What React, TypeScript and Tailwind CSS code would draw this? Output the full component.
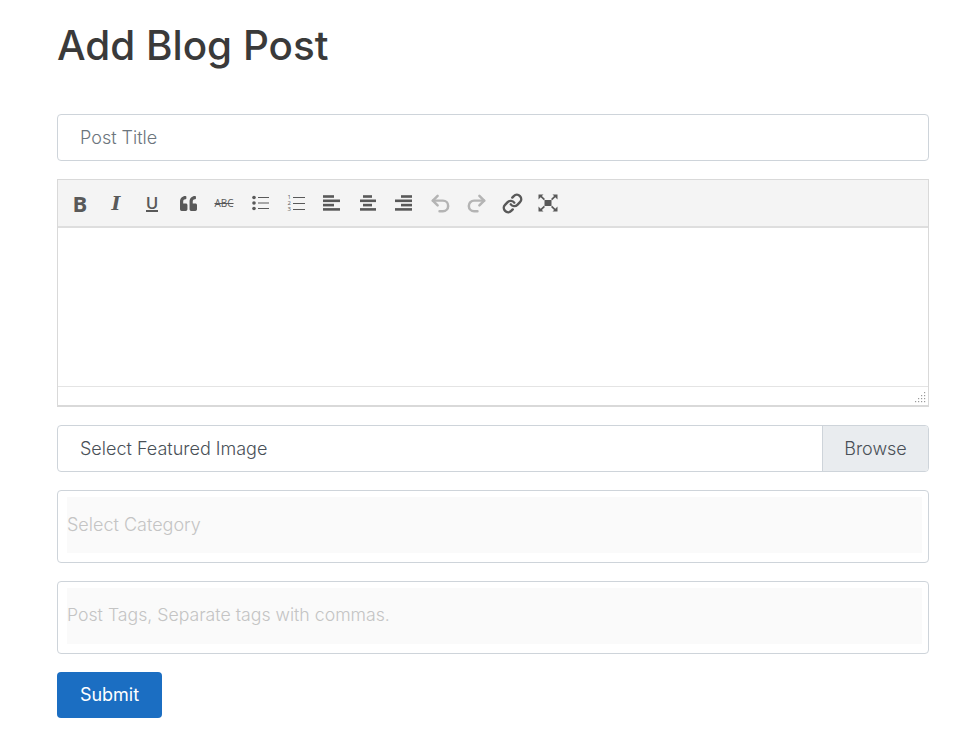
import { Link, Redo2, Undo2 } from "lucide-react"
import { FaQuoteLeft } from "react-icons/fa"

const ink = "#595959"

function ToolButton({ children }: { children: React.ReactNode }) {
  return <div className="w-[36px] h-[36px] flex items-center justify-center shrink-0">{children}</div>
}

function Lines({ rows }: { rows: [number, number][] }) {
  return (
    <svg width="18" height="16" viewBox="0 0 18 16" fill={ink}>
      {rows.map(([x, w], i) => (
        <rect key={i} x={x} y={i * 4.3 + 0.2} width={w} height="2.6" />
      ))}
    </svg>
  )
}

function BulletList() {
  return (
    <svg width="17" height="16" viewBox="0 0 17 16">
      <circle cx="2" cy="2.5" r="1.8" fill={ink} />
      <circle cx="2" cy="8" r="1.8" fill={ink} />
      <circle cx="2" cy="13.5" r="1.8" fill={ink} />
      <path d="M6 2.5h11M6 8h11M6 13.5h11" stroke={ink} strokeWidth="1" />
    </svg>
  )
}

function NumberList() {
  return (
    <div className="flex items-center gap-[1px] w-[17px] h-[17px]">
      <div className="w-[4px] text-[6px] leading-[6px] font-['Open_Sans'] text-[#595959]">1 2 3</div>
      <svg width="12" height="17" viewBox="0 0 12 17">
        <path d="M0 2.5h12M0 8.5h12M0 14.5h12" stroke={ink} strokeWidth="1" />
      </svg>
    </div>
  )
}

function Fullscreen() {
  return (
    <svg width="20" height="18" viewBox="0 0 20 18" fill={ink}>
      <rect x="6.5" y="6" width="7" height="6" />
      <path d="M0.5 0.5h5l-1.6 1.6 3.1 3-1.2 1.2-3.1-3-2.2 2.1z" />
      <path d="M19.5 0.5h-5l1.6 1.6-3.1 3 1.2 1.2 3.1-3 2.2 2.1z" />
      <path d="M0.5 17.5h5l-1.6-1.6 3.1-3-1.2-1.2-3.1 3-2.2-2.1z" />
      <path d="M19.5 17.5h-5l1.6-1.6-3.1-3 1.2-1.2 3.1 3 2.2-2.1z" />
    </svg>
  )
}

export default function App() {
  return (
    <div className="w-[975px] h-[746px] overflow-hidden bg-white pl-[57px] pr-[46px] font-['Inter',sans-serif] text-[#343a40]">
      <h1 className="h-[114px] pt-[22px] text-[40.4px] leading-[48px] font-medium text-[#3a3a3a]">Add Blog Post</h1>

      <div className="h-[47px] border border-[#ced4da] rounded-[4px] px-[22px] flex items-center text-[18px] font-light text-[#6c757d]">
        Post Title
      </div>

      <div className="mt-[18px] h-[228px] border border-[#d9d9d9] border-b-2 flex flex-col">
        <div className="h-[48px] bg-[#f4f4f4] border-b-2 border-[#dedede] pl-[4px] flex items-center">
          <ToolButton>
            <span className="font-['Open_Sans'] font-bold text-[22px] leading-none text-[#595959]">B</span>
          </ToolButton>
          <ToolButton>
            <span className="font-['DejaVu_Serif'] font-bold italic text-[19px] leading-none text-[#595959]">I</span>
          </ToolButton>
          <ToolButton>
            <span className="font-['Open_Sans'] font-semibold text-[17px] leading-[15px] text-[#595959] border-b-2 border-[#595959]">U</span>
          </ToolButton>
          <ToolButton>
            <FaQuoteLeft size={17} color={ink} />
          </ToolButton>
          <ToolButton>
            <span className="font-['Open_Sans'] text-[10px] leading-none text-[#595959] line-through">ABC</span>
          </ToolButton>
          <ToolButton><BulletList /></ToolButton>
          <ToolButton><NumberList /></ToolButton>
          <ToolButton><Lines rows={[[0, 11], [0, 17], [0, 11], [0, 17]]} /></ToolButton>
          <ToolButton><Lines rows={[[4, 9], [1, 16], [4, 9], [1, 16]]} /></ToolButton>
          <ToolButton><Lines rows={[[6, 11], [0, 17], [6, 11], [0, 17]]} /></ToolButton>
          <ToolButton><Undo2 size={23} color="#b4b4b4" strokeWidth={2.6} /></ToolButton>
          <ToolButton><Redo2 size={23} color="#b4b4b4" strokeWidth={2.6} /></ToolButton>
          <ToolButton><Link size={21} color={ink} strokeWidth={2.8} /></ToolButton>
          <ToolButton><Fullscreen /></ToolButton>
        </div>
        <div className="flex-1 bg-white" />
        <div className="h-[19px] border-t border-[#e4e4e4] flex justify-end items-end pr-[2px] pb-[2px]">
          <svg width="11" height="11" viewBox="0 0 11 11" fill="#9a9a9a">
            <rect x="9" y="0" width="1.2" height="1.2" />
            <rect x="9" y="3" width="1.2" height="1.2" />
            <rect x="6" y="3" width="1.2" height="1.2" />
            <rect x="9" y="6" width="1.2" height="1.2" />
            <rect x="6" y="6" width="1.2" height="1.2" />
            <rect x="3" y="6" width="1.2" height="1.2" />
            <rect x="9" y="9" width="1.2" height="1.2" />
            <rect x="6" y="9" width="1.2" height="1.2" />
            <rect x="3" y="9" width="1.2" height="1.2" />
            <rect x="0" y="9" width="1.2" height="1.2" />
          </svg>
        </div>
      </div>

      <div className="mt-[18px] h-[47px] border border-[#ced4da] rounded-[4px] flex overflow-hidden text-[18px] font-light text-[#495057]">
        <div className="flex-1 px-[22px] pb-[1px] flex items-center">Select Featured Image</div>
        <div className="w-[106px] pb-[1px] bg-[#e9ecef] border-l border-[#ced4da] flex items-center justify-center">Browse</div>
      </div>

      <div className="mt-[18px] h-[73px] border border-[#ced4da] rounded-[4px] pl-[9px] pr-[6px] pt-[6px] pb-[9px]">
        <div className="h-full pb-[1px] bg-[#fafafa] flex items-center text-[18px] font-light text-[#c4c4c4]">Select Category</div>
      </div>

      <div className="mt-[18px] h-[73px] border border-[#ced4da] rounded-[4px] pl-[9px] pr-[6px] pt-[6px] pb-[9px]">
        <div className="h-full pb-[1px] bg-[#fafafa] flex items-center text-[17.7px] font-light text-[#c4c4c4]">Post Tags, Separate tags with commas.</div>
      </div>

      <button className="mt-[18px] w-[105px] h-[46px] pb-[1px] rounded-[4px] bg-[#1b6ec2] text-white text-[18px] flex items-center justify-center">
        Submit
      </button>
    </div>
  )
}
